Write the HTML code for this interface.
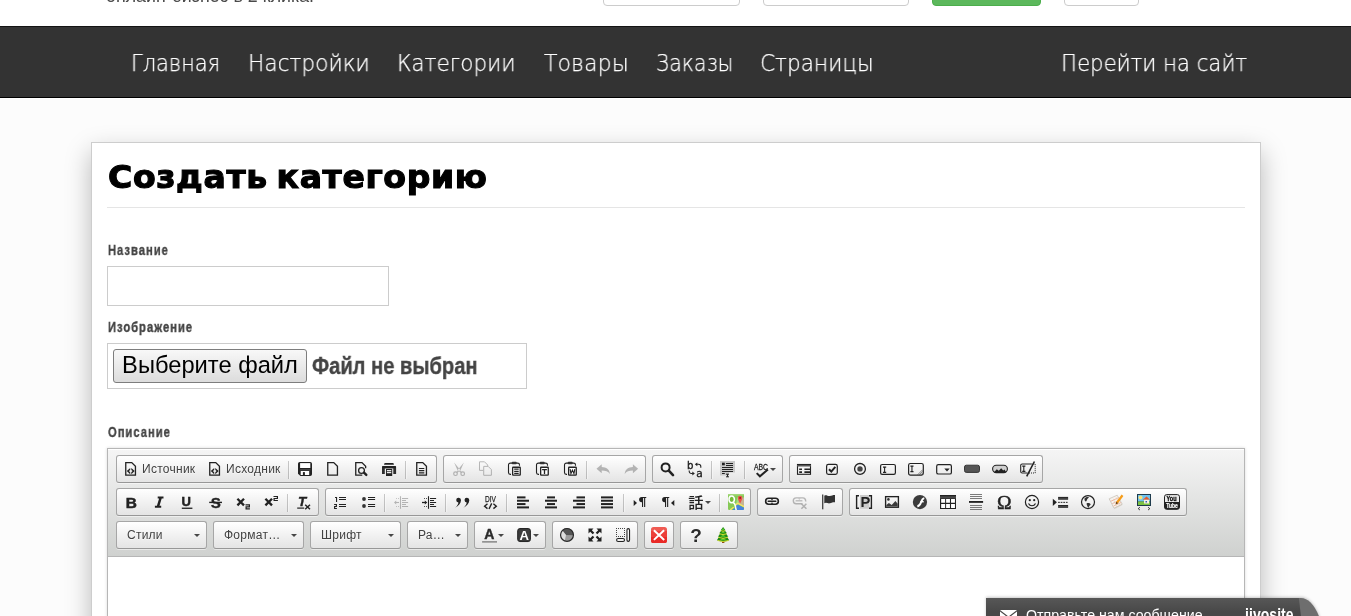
<!DOCTYPE html>
<html lang="ru">
<head>
<meta charset="utf-8">
<title>Создать категорию</title>
<style>
*{box-sizing:border-box}
html,body{margin:0;padding:0}
body{width:1351px;height:616px;overflow:hidden;background:#fcfcfc;font-family:"Liberation Sans",sans-serif;position:relative}
#nav a,h1,.lbl,#file .fb,#file .ft,.slogan,.lb,.ct,#jivo .t,#jivo .logo{will-change:transform}
/* top strip */
#top{position:absolute;left:0;top:0;width:1351px;height:26px;background:#fff;overflow:hidden}
#top .slogan{position:absolute;left:106px;top:-13.7px;font-size:17.8px;line-height:20px;color:#4a4a4a;white-space:nowrap}
#top .inp{position:absolute;top:-30px;height:36px;border:1px solid #ccc;border-radius:4px;background:#fff}
#top .btn-g{position:absolute;top:-30px;height:36px;border:1px solid #4cae4c;border-radius:4px;background:#5cb85c}
/* navbar */
#nav{position:absolute;left:0;top:26px;width:1351px;height:72px;background:#333;border-top:1px solid #141414;border-bottom:1px solid #000;box-shadow:0 1px 0 #fff}
#nav a{position:absolute;top:21px;font-family:"DejaVu Sans Light","DejaVu Sans","Liberation Sans",sans-serif;font-weight:200;font-size:23.8px;line-height:30px;color:#fff;white-space:nowrap;transform-origin:0 50%;text-decoration:none;-webkit-text-stroke:.25px #fff}
/* panel */
#panel{position:absolute;left:91px;top:142px;width:1170px;height:520px;background:#fff;border:1px solid #cdcdcd;box-shadow:0 10px 24px rgba(0,0,0,.27)}
h1{position:absolute;left:108px;top:154px;margin:0;font-family:"DejaVu Sans","Liberation Sans",sans-serif;font-weight:bold;font-size:32px;line-height:46px;letter-spacing:.62px;word-spacing:-3.2px;color:#000;white-space:nowrap;-webkit-text-stroke:1.1px #000;transform-origin:0 50%;transform:scaleX(1.033)}
#hr{position:absolute;left:107px;top:207px;width:1138px;height:1px;background:#e5e5e5}
.lbl{position:absolute;left:107.5px;font-family:"Liberation Sans",sans-serif;font-weight:bold;font-size:14px;line-height:18px;color:#444;white-space:nowrap;transform-origin:0 50%;transform:scaleX(.8);letter-spacing:1.25px;-webkit-text-stroke:.35px #444}
#name{position:absolute;left:107px;top:266px;width:282px;height:40px;border:1px solid #ccc;background:#fff}
#file{position:absolute;left:107px;top:343px;width:420px;height:46px;border:1px solid #ccc;background:#fff}
#file .fb{position:absolute;left:5px;top:5px;width:194px;height:34px;border:1px solid #7d7d7d;border-radius:3px;background:linear-gradient(#f8f8f8,#dcdcdc);font-size:23.7px;line-height:31px;color:#000;text-align:center;white-space:nowrap}
#file .ft{position:absolute;left:204px;top:6px;font-weight:bold;font-size:23.5px;line-height:32px;color:#444;white-space:nowrap;transform-origin:0 50%;transform:scaleX(.856);-webkit-text-stroke:.4px #444}
/* editor (CKEditor moono look) */
#cke,#cke *{box-sizing:content-box}
#cke{position:absolute;left:107px;top:448px;width:1136px;height:200px;border:1px solid #b6b6b6;background:#fff;box-shadow:0 0 3px rgba(0,0,0,.15);font:12px "Liberation Sans",Arial,sans-serif}
#cke .top{display:block;height:99px;padding:6px 8px 2px;border-bottom:1px solid #b6b6b6;box-shadow:0 1px 0 #fff inset;background:linear-gradient(#f5f5f5,#cfd1cf)}
.tg,.cb{float:left;margin:0 6px 5px 0;border:1px solid #a6a6a6;border-bottom-color:#979797;border-radius:3px;box-shadow:0 1px 0 rgba(255,255,255,.5),0 0 2px rgba(255,255,255,.15) inset,0 1px 0 rgba(255,255,255,.15) inset;background:linear-gradient(#fff,#e4e4e4)}
.b{float:left;height:18px;padding:4px 6px;display:inline-block}
.i{float:left;width:16px;height:16px;margin-top:1px;fill:#222;overflow:visible;will-change:transform}
.i .s{fill:none;stroke:#222}
.d .i{opacity:.3}
.lb{float:left;padding-left:3px;margin-top:1px;line-height:17px;color:#424242;text-shadow:0 1px 0 rgba(255,255,255,.5);letter-spacing:.27px;white-space:nowrap}
.ar{float:left;margin:8px 0 0 1px;width:0;height:0;border-left:3px solid transparent;border-right:3px solid transparent;border-top:3px solid #474747}
.sep{float:left;background:rgba(0,0,0,.2);margin:5px 2px 0;height:18px;width:1px;box-shadow:1px 0 1px rgba(255,255,255,.5)}
.brk{display:block;clear:left}
.ct{float:left;line-height:26px;padding-left:10px;overflow:hidden;white-space:nowrap;letter-spacing:.25px;color:#424242;text-shadow:0 1px 0 rgba(255,255,255,.5)}
.co{float:left;height:19px;margin:1px 7px;width:5px}
.ca{float:left;margin:11px 0 0;width:0;height:0;border-left:3px solid transparent;border-right:3px solid transparent;border-top:3px solid #474747}
/* jivosite label */
#jivo{position:absolute;left:986px;top:598px;width:345px;height:30px}
#jivo .bg{position:absolute;left:0;top:0;width:339.6px;height:80px;background:#6e6e6e;border-top-right-radius:25px 60px;box-shadow:0 -1px 3px rgba(0,0,0,.22)}
#jivo .fg{position:absolute;left:0;top:0;width:318px;height:30px;background:linear-gradient(#575757,#484848 14px);clip-path:polygon(0 0,312.8px 0,316.5px 30px,0 30px)}
#jivo .t{position:absolute;left:40px;top:7.3px;font-size:14.2px;line-height:20px;color:#fff;white-space:nowrap}
#jivo .logo{position:absolute;left:259px;top:2.5px;font-size:14px;line-height:20px;font-weight:bold;color:#fff;letter-spacing:.05px;transform-origin:0 0;transform:scaleY(1.35)}
#jivo svg{position:absolute;left:14px;top:12px;width:17px;height:12px}
</style>
</head>
<body>
<div id="top">
  <div class="slogan">онлайн-бизнес в 2 клика.</div>
  <div class="inp" style="left:603px;width:137px"></div>
  <div class="inp" style="left:763px;width:146px"></div>
  <div class="btn-g" style="left:932px;width:109px"></div>
  <div class="inp" style="left:1064px;width:75px"></div>
</div>
<div id="nav">
  <a style="left:131px;transform:scaleX(.88)">Главная</a>
  <a style="left:248px;transform:scaleX(.911)">Настройки</a>
  <a style="left:397px;transform:scaleX(.904)">Категории</a>
  <a style="left:543.5px;transform:scaleX(.931)">Товары</a>
  <a style="left:655.5px;transform:scaleX(.865)">Заказы</a>
  <a style="left:760px;transform:scaleX(.909)">Страницы</a>
  <a style="left:1061px;transform:scaleX(.893)">Перейти на сайт</a>
</div>
<div id="panel"></div>
<h1>Создать категорию</h1>
<div id="hr"></div>
<div class="lbl" style="top:241px">Название</div>
<div id="name"></div>
<div class="lbl" style="top:318px">Изображение</div>
<div id="file"><div class="fb">Выберите файл</div><div class="ft">Файл не выбран</div></div>
<div class="lbl" style="top:423px">Описание</div>
<div id="cke"><span class="top"><span class="tg"><a class="b" title="Источник"><svg class="i" viewBox="0 0 16 16"><path class="s" d="M2.75 1.55h6l3.7 3.7v8.9h-9.7z" stroke-width="1.3"/><path d="M7.2 7L3.8 10.1l3.4 3.1v-2l-1.3-1.1 1.3-1.2zM8.3 7l3.4 3.1-3.4 3.1v-2l1.3-1.1-1.3-1.2z"/></svg><span class="lb" style="width:53px">Источник</span></a><a class="b" title="Исходник"><svg class="i" viewBox="0 0 16 16"><path class="s" d="M2.75 1.55h6l3.7 3.7v8.9h-9.7z" stroke-width="1.3"/><path d="M7.2 7L3.8 10.1l3.4 3.1v-2l-1.3-1.1 1.3-1.2zM8.3 7l3.4 3.1-3.4 3.1v-2l1.3-1.1-1.3-1.2z"/></svg><span class="lb" style="width:54px">Исходник</span></a><span class="sep"></span><a class="b"><svg class="i" viewBox="0 0 16 16"><path d="M2.8 1h10.4A1.8 1.8 0 0 1 15 2.8v10.4a1.8 1.8 0 0 1-1.8 1.8H3.5L1 12.8V2.8A1.8 1.8 0 0 1 2.8 1z"/><rect x="3.1" y="2.1" width="10.2" height="4.9" fill="#fff"/><rect x="3.1" y="8" width="10.2" height="1.6" fill="#444"/><rect x="3.7" y="10" width="8.5" height="4" fill="#fff"/><rect x="5.9" y="11.1" width="2" height="2.9"/></svg></a><a class="b"><svg class="i" viewBox="0 0 16 16"><path class="s" d="M2.75 1.55h6l3.7 3.7v8.9h-9.7z" stroke-width="1.3"/></svg></a><a class="b"><svg class="i" viewBox="0 0 16 16"><path class="s" d="M12.65 7.2V5.25l-3.7-3.7h-6.2v12.6h6.5" stroke-width="1.3"/><circle class="s" cx="8.5" cy="9.45" r="2.9" stroke-width="1.3"/><path class="s" d="M11 11.7l2.3 2.2" stroke-width="2.4" stroke-linecap="round"/></svg></a><a class="b"><svg class="i" viewBox="0 0 16 16"><path d="M3.1 3.85v-.6A1.25 1.25 0 0 1 4.35 2h7.25a1.25 1.25 0 0 1 1.25 1.25v.6z"/><path d="M1 13V6.6a1.5 1.5 0 0 1 1.5-1.5h11.1a1.5 1.5 0 0 1 1.5 1.5V13h-2.8V7.5H3.8V13z" fill="#2e2e2e"/><rect x="1" y="5.1" width="14.1" height="2" rx="1"/><rect x="5" y="8" width="6.2" height="7"/><rect x="5.9" y="9.1" width="4.4" height="1.2" fill="#fff"/><rect x="5.9" y="11.1" width="4.4" height="1.1" fill="#fff"/></svg></a><span class="sep"></span><a class="b"><svg class="i" viewBox="0 0 16 16"><path class="s" d="M2.75 1.55h6l3.7 3.7v8.9h-9.7z" stroke-width="1.3"/><path class="s" d="M4.9 7.5h5.4M4.9 9.6h5.4M4.9 11.8h5.4" stroke-width="1.2"/></svg></a></span><span class="tg"><a class="b d"><svg class="i" viewBox="0 0 16 16"><path d="M4.1 1.6l6.2 7.4-2.1 1.8zM13.9 1.6L7.7 9l2.1 1.8z"/><circle class="s" cx="5.5" cy="12.7" r="1.8" stroke-width="1.2"/><circle class="s" cx="12.7" cy="12.7" r="1.8" stroke-width="1.2"/><path class="s" d="M8.4 10.2l-1.8 1.3M9.7 10.2l1.8 1.3" stroke-width="1.3"/></svg></a><a class="b d"><svg class="i" viewBox="0 0 16 16"><path class="s" d="M5.2 9.4H1.5V.8h5l3.2 3.2v1" stroke-width="1"/><path class="s" d="M5.7 5.4h4.5l3.2 3.2v5.7H5.7z" stroke-width="1"/></svg></a><a class="b"><svg class="i" viewBox="0 0 16 16"><path class="s" d="M5 13.4H4.3a1.8 1.8 0 0 1-1.8-1.8V3.9a1.8 1.8 0 0 1 1.8-1.8h7.4a1.8 1.8 0 0 1 1.8 1.8v.9" stroke-width="1.1"/><rect x="5.7" y=".7" width="5" height="2.5" rx=".9" fill="#333"/><rect x="6.6" y="6.2" width="7.7" height="8" fill="#fff"/><rect class="s" x="6.65" y="6.25" width="7.6" height="7.9" rx=".5" stroke-width="1.3"/><path class="s" d="M8.2 8.2h4.5M8.2 10.3h4.5M8.2 12.4h4.5" stroke-width="1.2"/></svg></a><a class="b"><svg class="i" viewBox="0 0 16 16"><path class="s" d="M5 13.4H4.3a1.8 1.8 0 0 1-1.8-1.8V3.9a1.8 1.8 0 0 1 1.8-1.8h7.4a1.8 1.8 0 0 1 1.8 1.8v.9" stroke-width="1.1"/><rect x="5.7" y=".7" width="5" height="2.5" rx=".9" fill="#333"/><rect x="6.6" y="6.2" width="7.7" height="8" fill="#fff"/><rect class="s" x="6.65" y="6.25" width="7.6" height="7.9" rx=".5" stroke-width="1.3"/><path d="M8.1 8h4.8v1.3h-1.75v3.6H9.85V9.3H8.1z"/></svg></a><a class="b"><svg class="i" viewBox="0 0 16 16"><path class="s" d="M5 13.4H4.3a1.8 1.8 0 0 1-1.8-1.8V3.9a1.8 1.8 0 0 1 1.8-1.8h7.4a1.8 1.8 0 0 1 1.8 1.8v.9" stroke-width="1.1"/><rect x="5.7" y=".7" width="5" height="2.5" rx=".9" fill="#333"/><rect x="6.6" y="6.2" width="7.7" height="8" fill="#fff"/><rect class="s" x="6.65" y="6.25" width="7.6" height="7.9" rx=".5" stroke-width="1.3"/><path class="s" d="M8.1 8.2l.85 4.4 1.5-3.5 1.5 3.5.85-4.4" stroke-width="1.1"/></svg></a><span class="sep"></span><a class="b d"><svg class="i" viewBox="0 0 16 16"><path d="M1.5 7.7l5.2-4.5v2.9c4.6.1 7.7 2.2 8.2 6.8-1.7-2.6-4.3-3.5-8.2-3.5v2.8z"/></svg></a><a class="b d"><svg class="i" viewBox="0 0 16 16"><g transform="translate(16.6 0) scale(-1 1)"><path d="M1.5 7.7l5.2-4.5v2.9c4.6.1 7.7 2.2 8.2 6.8-1.7-2.6-4.3-3.5-8.2-3.5v2.8z"/></g></svg></a></span><span class="tg"><a class="b"><svg class="i" viewBox="0 0 16 16"><circle class="s" cx="6.6" cy="6.4" r="4" stroke-width="2"/><path class="s" d="M9.8 9.7l4.2 4.4" stroke-width="2.6" stroke-linecap="round"/></svg></a><a class="b"><svg class="i" viewBox="0 0 16 16"><text x="0" y="7.8" font-size="10.2" style="stroke:#222" stroke-width=".35" font-family="DejaVu Sans,Liberation Sans,sans-serif">b</text><text x="9.3" y="15.6" font-size="10.6" style="stroke:#222" stroke-width=".35" font-family="DejaVu Sans,Liberation Sans,sans-serif">a</text><path class="s" d="M9.5 3.3h2a2.3 2.3 0 0 1 2.3 2.3v1.2" stroke-width="1.1"/><path d="M10.3 1.4v3.8L7.8 3.3z"/><path class="s" d="M2.2 9.5v.7a2.3 2.3 0 0 0 2.3 2.3h1.3" stroke-width="1.1"/><path d="M5.3 10.6v3.8l2.5-1.9z"/></svg></a><span class="sep"></span><a class="b"><svg class="i" viewBox="0 0 16 16"><path d="M0 0h15v11.5H9v3H0z" fill="#c9c9c9"/><rect x="2" y="1.7" width="2.8" height="2.6"/><path class="s" d="M6 2.5h7M6 4.5h7M2 6.5h11M2 8.5h11M2 10.5h11M2 12.5h2.8" stroke-width="1"/><path class="s" d="M6 13.2h3M6 15.8h3M7.5 13.2v2.6" stroke-width="1"/></svg></a><span class="sep"></span><a class="b"><svg class="i" viewBox="0 0 16 16"><text x="0.9" y="8.7" font-size="9.3" textLength="14" lengthAdjust="spacingAndGlyphs" style="stroke:#222" stroke-width=".3" font-family="Liberation Sans,sans-serif">ABC</text><path class="s" d="M3.7 12.1l3.2 3.2 8-6.8" stroke-width="2"/></svg><span class="ar"></span></a></span><span class="tg"><a class="b"><svg class="i" viewBox="0 0 16 16"><rect class="s" x="1.5" y="3.5" width="13" height="9.8" stroke-width="1.1"/><rect x="1" y="3" width="14" height="2.5" fill="#555"/><rect x="1" y="3" width="14" height="1"/><path class="s" d="M3.2 8.2h2.8M8.4 8.2h5.6M3.2 11.1h2.8M8.4 11.1h5.6" stroke-width="1.6"/></svg></a><a class="b"><svg class="i" viewBox="0 0 16 16"><rect class="s" x="2.6" y="3.4" width="10.7" height="9.9" rx="1.8" stroke-width="1.2"/><path class="s" d="M5 8.2l2.3 2.4 4-4.8" stroke-width="2"/></svg></a><a class="b"><svg class="i" viewBox="0 0 16 16"><circle class="s" cx="8" cy="7.9" r="5.4" stroke-width="1.3"/><circle cx="8" cy="7.9" r="2.7" fill="#444"/></svg></a><a class="b"><svg class="i" viewBox="0 0 16 16"><rect class="s" x=".6" y="3.5" width="14.8" height="9.8" rx="1.6" stroke-width="1.2"/><path class="s" d="M3 6.1h3.2M3 11.4h3.2M4.6 6.1v5.3" stroke-width="1.1"/></svg></a><a class="b"><svg class="i" viewBox="0 0 16 16"><rect class="s" x=".6" y="2.5" width="14.7" height="11.6" rx="1.8" stroke-width="1.2"/><path class="s" d="M2.4 5.1h3.1M2.4 10.6h3.1M3.95 5.1v5.5" stroke-width="1.1"/><path class="s" d="M14.8 10.3l-4 4M14.8 12l-2.3 2.3M14.8 8.6l-5.7 5.7" stroke-width=".7" style="stroke:#555"/></svg></a><a class="b"><svg class="i" viewBox="0 0 16 16"><rect class="s" x=".7" y="3.6" width="14.7" height="9.4" rx="1.6" stroke-width="1.2"/><path d="M8.3 7.4h5.4l-2.7 3z"/></svg></a><a class="b"><svg class="i" viewBox="0 0 16 16"><rect x=".5" y="4.2" width="15" height="7.2" rx="1.8" fill="#555" style="stroke:#2a2a2a" stroke-width=".9"/></svg></a><a class="b"><svg class="i" viewBox="0 0 16 16"><rect x=".6" y="4.3" width="14.8" height="7.3" rx="3.6" fill="#d0d0d0"/><path d="M2 11.2l2.8-3 2 1.6 2.4-2.6 2 2.2 1.3-1 1.7 2.8z"/><rect class="s" x=".6" y="4.3" width="14.8" height="7.3" rx="3.6" stroke-width="1.1"/></svg></a><a class="b"><svg class="i" viewBox="0 0 16 16"><path class="s" d="M11.4 3H2.2a1.5 1.5 0 0 0-1.5 1.5v6A1.5 1.5 0 0 0 2.2 12h5.3" stroke-width="1.1"/><path class="s" d="M11.4 3h3.8v9H8.5" stroke-width="1" stroke-dasharray="1 1"/><path class="s" d="M2.2 5.1h3.2M2.2 10.4h3.2M3.8 5.1v5.3" stroke-width="1.1"/><path class="s" d="M14.4 .5L6.7 15.3" stroke-width="1.6"/></svg></a></span><span class="brk"></span><span class="tg"><a class="b"><svg class="i" viewBox="0 0 16 16"><text x="2.7" y="13.7" font-size="15.4" font-weight="bold" style="stroke:#222" stroke-width=".55" font-family="Liberation Sans,sans-serif">B</text></svg></a><a class="b"><svg class="i" viewBox="0 0 16 16"><path d="M6.7 2.5H12.5V4.4H10.7L8.5 11.8H10.2V13.7H3.9V11.8H5.9L8.1 4.4H6.7z"/></svg></a><a class="b"><svg class="i" viewBox="0 0 16 16"><text x="2.5" y="11.8" font-size="13" font-weight="bold" style="stroke:#222" stroke-width=".5" font-family="Liberation Sans,sans-serif">U</text><rect x="2.8" y="13.6" width="10.6" height="1.3"/></svg></a><a class="b"><svg class="i" viewBox="0 0 16 16"><text x="3.7" y="13.5" font-size="15.2" font-weight="bold" style="stroke:#222" stroke-width=".3" font-family="Liberation Sans,sans-serif">S</text><rect x="2.2" y="7.7" width="12.8" height="1.4"/></svg></a><a class="b"><svg class="i" viewBox="0 0 16 16"><path class="s" d="M2.4 4.8l6.6 6.6M9 4.8l-6.6 6.6" stroke-width="2.3"/><g transform="translate(10.5 10.3)"><path class="s" d="M0 .6h3.9v2H.6v2h3.8" stroke-width="1.2"/></g></svg></a><a class="b"><svg class="i" viewBox="0 0 16 16"><path class="s" d="M2.4 4.8l6.6 6.6M9 4.8l-6.6 6.6" stroke-width="2.3"/><g transform="translate(10.5 1.9)"><path class="s" d="M0 .6h3.9v2H.6v2h3.8" stroke-width="1.2"/></g></svg></a><span class="sep"></span><a class="b"><svg class="i" viewBox="0 0 16 16"><text x="2" y="11.9" font-size="13.5" font-weight="bold" font-style="italic" style="stroke:#222" stroke-width=".4" font-family="Liberation Sans,sans-serif">T</text><rect x="1.2" y="13.5" width="7" height="1.2"/><path class="s" d="M9.2 10.8l4.8 4.4M14 10.8l-4.8 4.4" stroke-width="1.5"/></svg></a></span><span class="tg"><a class="b"><svg class="i" viewBox="0 0 16 16"><path class="s" d="M7 3.5h7M7 5.5h7M7 10.5h7M7 12.5h7" stroke-width="1.1"/><path class="s" d="M3 3.55h1.55V8" stroke-width="1.1"/><path class="s" d="M2.1 10.55h2.3v1.95H2.6v1.95h2.3" stroke-width="1.1"/></svg></a><a class="b"><svg class="i" viewBox="0 0 16 16"><path class="s" d="M8 3.5h7.1M8 5.5h7.1M8 10.5h7.1M8 12.5h7.1" stroke-width="1.1"/><circle cx="4" cy="5" r="1.9" fill="#333"/><circle cx="4" cy="12" r="1.9" fill="#333"/></svg></a><span class="sep"></span><a class="b d"><svg class="i" viewBox="0 0 16 16"><path class="s" d="M7.5 2.2v12.6" stroke-width="1.1"/><path class="s" d="M9 4.5h6.1M9 6.5h4M9 8.5h6.1M9 10.5h4M9 12.5h6.1" stroke-width="1.1"/><path d="M3 4h1v1H3zM5 4h1v1H5zM3 12h1v1H3zM5 12h1v1H5z" fill="#555"/><path class="s" d="M2.5 8.5H6" stroke-width="1.1"/><path d="M1 8.5l2.2-1.9v3.8z"/></svg></a><a class="b"><svg class="i" viewBox="0 0 16 16"><path class="s" d="M7.5 2.2v12.6" stroke-width="1.1"/><path class="s" d="M9 4.5h6.1M9 6.5h4M9 8.5h6.1M9 10.5h4M9 12.5h6.1" stroke-width="1.1"/><path d="M3 4h1v1H3zM5 4h1v1H5zM3 12h1v1H3zM5 12h1v1H5z" fill="#555"/><path class="s" d="M1 8.5h3.5" stroke-width="1.3"/><path d="M6.3 8.5L3.8 6.4v4.2z"/></svg></a><span class="sep"></span><a class="b"><svg class="i" viewBox="0 0 16 16"><path transform="translate(0 0)" d="M2.2 6A2.4 2.4 0 1 1 7 6.2C6.9 9.5 4.5 12 1.1 13.8 3.3 11.8 4.3 10 4.4 8.4A2.4 2.4 0 0 1 2.2 6z"/><path transform="translate(8.3 0)" d="M2.2 6A2.4 2.4 0 1 1 7 6.2C6.9 9.5 4.5 12 1.1 13.8 3.3 11.8 4.3 10 4.4 8.4A2.4 2.4 0 0 1 2.2 6z"/></svg></a><a class="b"><svg class="i" viewBox="0 0 16 16"><text x="3" y="7.8" font-size="9.3" textLength="11" lengthAdjust="spacingAndGlyphs" style="stroke:#222" stroke-width=".25" font-family="Liberation Sans,sans-serif">DIV</text><path class="s" d="M5.5 9.8L2.6 12.2l2.9 2.4M11.4 9.8l2.9 2.4-2.9 2.4M9.7 9.4L7 15" stroke-width="1.4"/></svg></a><span class="sep"></span><a class="b"><svg class="i" viewBox="0 0 16 16"><rect x="2" y="2.40" width="8.5" height="2"/><rect x="2" y="5.73" width="12" height="2"/><rect x="2" y="9.07" width="8.5" height="2"/><rect x="2" y="12.40" width="12" height="2"/></svg></a><a class="b"><svg class="i" viewBox="0 0 16 16"><rect x="4" y="2.40" width="8" height="2"/><rect x="2" y="5.73" width="12" height="2"/><rect x="4" y="9.07" width="8" height="2"/><rect x="2" y="12.40" width="12" height="2"/></svg></a><a class="b"><svg class="i" viewBox="0 0 16 16"><rect x="5.5" y="2.40" width="8.5" height="2"/><rect x="2" y="5.73" width="12" height="2"/><rect x="5.5" y="9.07" width="8.5" height="2"/><rect x="2" y="12.40" width="12" height="2"/></svg></a><a class="b"><svg class="i" viewBox="0 0 16 16"><rect x="2" y="2.40" width="12" height="2"/><rect x="2" y="5.73" width="12" height="2"/><rect x="2" y="9.07" width="12" height="2"/><rect x="2" y="12.40" width="12" height="2"/></svg></a><span class="sep"></span><a class="b"><svg class="i" viewBox="0 0 16 16"><path d="M1.7 5.9l3.3 3-3.3 3z"/><path d="M9.70 3H14.25V3.9H13.20V13H12.10V3.9H11.10V13H10.00V8.2H9.70A2.6 2.6 0 0 1 9.70 3z"/></svg></a><a class="b"><svg class="i" viewBox="0 0 16 16"><path d="M14.3 5.9l-3.3 3 3.3 3z"/><path d="M4.70 3H9.25V3.9H8.20V13H7.10V3.9H6.10V13H5.00V8.2H4.70A2.6 2.6 0 0 1 4.70 3z"/></svg></a><a class="b"><svg class="i" viewBox="0 0 16 16"><text x=".2" y="13.8" font-size="15.2" font-weight="500" font-family="Noto Sans CJK JP,Noto Sans CJK SC,WenQuanYi Zen Hei,sans-serif">話</text></svg><span class="ar"></span></a><span class="sep"></span><a class="b"><svg class="i" viewBox="0 0 16 16"><rect width="16" height="16" rx="1.2" fill="#86c956"/><rect width="16" height="1.6" rx=".8" fill="#a3d87a"/><path d="M10.3 3.5H16v9l-5.7-2.7z" fill="#c7b494"/><path d="M9.3 3.5l1.2-.5v7l-2.8 2.2z" fill="#a8dc84"/><path d="M6.6 10.7L9.7 8.4l6.3 3.4v1.6L9.8 10.2l-2.3 1.8z" fill="#f3e463"/><path d="M7.6 12.3l2.2-1.7L16 13.8v1a1.2 1.2 0 0 1-1.2 1.2H8.7z" fill="#4583dc"/><path d="M1.8 15.2l3.4-2.5.9.9L3.4 16H2.2z" fill="#f3e463"/><path d="M4.2 16l2.3-1.9L7.8 16z" fill="#4583dc"/><ellipse cx="3.7" cy="5.3" rx="2.7" ry="3.4" fill="#74bb38" style="stroke:#fff" stroke-width="1.5"/><path class="s" d="M5.3 8.5C8.2 10.3 6.8 13 8.3 16" style="stroke:#fff" stroke-width="1.5"/><path d="M12.1 1.7a2.2 2.2 0 0 1 2.2 2.2c0 1.7-2.2 5.4-2.2 5.4S9.9 5.6 9.9 3.9a2.2 2.2 0 0 1 2.2-2.2z" fill="#ec5248"/><circle cx="12.1" cy="3.9" r=".85" fill="#7d1c15"/></svg></a></span><span class="tg"><a class="b"><svg class="i" viewBox="0 0 16 16"><rect class="s" x="1.65" y="4.3" width="12.7" height="5.9" rx="2.95" stroke-width="1.6"/><rect x="3.5" y="6.6" width="9" height="1.3" rx=".6"/><path d="M6.7 4.8h2.6L8 6.2zM6.7 9.7h2.6L8 8.3z"/></svg></a><a class="b d"><svg class="i" viewBox="0 0 16 16"><path class="s" d="M10.5 9.7H4.2a2.9 2.9 0 0 1 0-5.8h6.6a2.9 2.9 0 0 1 2.8 3.6" stroke-width="1.4"/><path class="s" d="M3.6 6.8h6.8" stroke-width="1.2"/><path d="M6.1 4.5h2.4L7.3 5.7z"/><path class="s" d="M9.4 9.7l5 5M14.4 9.7l-5 5" stroke-width="1.5"/></svg></a><a class="b"><svg class="i" viewBox="0 0 16 16"><rect x="2.2" y=".5" width="1.1" height="14.8"/><path d="M4.3 1.8c1.8-1.4 3.5.6 5.5.2s3.7-1.3 5.2-1v7.3c-1.5-.3-3.2.5-5.2 1s-3.7-1.5-5.5 0z" fill="#333"/></svg></a></span><span class="tg"><a class="b"><svg class="i" viewBox="0 0 16 16"><rect x="3.95" y="1" width="9.35" height="13.7" fill="#cbcbcb"/><text x="4.5" y="12.85" font-size="14.7" font-weight="bold" font-family="Liberation Sans,sans-serif">P</text><path class="s" d="M3 1.7H.6v12.6H3M13 1.7h2.4v12.6H13" stroke-width="1.4"/></svg></a><a class="b"><svg class="i" viewBox="0 0 16 16"><rect class="s" x="1.6" y="2.65" width="12.8" height="10.6" stroke-width="1.35"/><path d="M2.3 12.6V11l2.6-2 2.8 2L11.4 7l2.3 2.7v2.9z" fill="#3a3a3a"/><circle cx="4.4" cy="5.4" r="1.3" fill="#333"/></svg></a><a class="b"><svg class="i" viewBox="0 0 16 16"><circle cx="7.95" cy="8.03" r="7.15" fill="#3c3c3c"/><path class="s" d="M5.3 12.3c2.2-.2 3-2.1 3.7-4s1.4-3.9 3.3-4.2" style="stroke:#fff" stroke-width="1.9"/><path class="s" d="M8.4 7.7h3.3" style="stroke:#fff" stroke-width="1.5"/></svg></a><a class="b"><svg class="i" viewBox="0 0 16 16"><rect x="0" y="1" width="16" height="14"/><rect x="0" y="2.3" width="16" height="2.2" fill="#4a4a4a"/><path d="M1.15 5.1h4v3.7h-4zM6.1 5.1h3.85v3.7H6.1zM11.05 5.1h3.9v3.7h-3.9zM1.15 10.1h4v3.9h-4zM6.1 10.1h3.85v3.9H6.1zM11.05 10.1h3.9v3.9h-3.9z" fill="#fff"/></svg></a><a class="b"><svg class="i" viewBox="0 0 16 16"><path class="s" d="M2 .5h12M2 2.5h12M2 4.5h12M2 11.5h12M2 13.5h12M2 15.5h12" stroke-width=".8" style="stroke:#5a5a5a"/><rect x="1" y="7" width="14.1" height="1.85"/></svg></a><a class="b"><svg class="i" viewBox="0 0 16 16"><text x="1" y="14.7" font-size="19.6" style="stroke:#222" stroke-width=".5" font-family="Liberation Serif,serif">Ω</text></svg></a><a class="b"><svg class="i" viewBox="0 0 16 16"><circle class="s" cx="8" cy="8" r="6.6" stroke-width="1.2"/><circle cx="5.8" cy="6.2" r="1.1"/><circle cx="10.2" cy="6.2" r="1.1"/><path class="s" d="M4.5 9.5c1.5 3 5.5 3 7 0" stroke-width="1.2"/></svg></a><a class="b"><svg class="i" viewBox="0 0 16 16"><path d="M.8 4.8l4.1 3.55L.8 11.9z"/><rect x="6.1" y="2.9" width="10" height="2.8"/><rect x="6.1" y="11" width="10" height="2.8"/><path class="s" d="M6.1 4.3h10M6.1 12.4h10" stroke-width=".4" style="stroke:#888"/><path class="s" d="M6.1 8.35h10" stroke-width="1" stroke-dasharray="1.7 .9"/></svg></a><a class="b"><svg class="i" viewBox="0 0 16 16"><circle class="s" cx="8" cy="8.05" r="6.5" stroke-width="1.2"/><path d="M4.6 4.3c1.3-1.4 3-1.6 4.3-1.2-.2 1.2-1.3 1.5-1.8 2.5s-.4 2-1.4 1.9-1.5-1.8-1.1-3.2zM6.8 9.2c1.3-.6 3.2-.2 3.9 1.1-.5 1-1.4 1.3-1.7 2.4s-.7 1.4-1.2.4-.5-1.3-.9-2.2-.4-1.4-.1-1.7z" fill="#333"/></svg></a><a class="b"><svg class="i" viewBox="0 0 16 16"><path d="M1.5 5.5l7.8-3.7 5.2 9.2-8 4.2z" fill="#dcd8d2"/><path d="M1.2 4.8l8-3.6 5 9-8.2 4z" fill="#f6f3ee" style="stroke:#bdb4a8" stroke-width=".6"/><path d="M3 7.2l7.5-3.5M4.3 9.6l7.5-3.5M5.6 12l7.5-3.5" style="stroke:#eda88f" stroke-width=".8" fill="none"/><path d="M5.3 4.8l3.3 8M8.3 3.4l3.3 8" style="stroke:#d9cfc3" stroke-width=".6" fill="none"/><path d="M13.6 .6l1.8 1.3-5.3 7.3-2.4 1 .6-2.4z" fill="#f59c1a"/><path d="M7.7 10.2l.6-2.4 1.8 1.4z" fill="#5a3d1c"/></svg></a><a class="b"><svg class="i" viewBox="0 0 16 16"><rect x="1" y="0" width="14" height="12" fill="#1f3b4d"/><rect x="2" y="1" width="12" height="6.5" fill="#6fc3f0"/><circle cx="4.5" cy="3.5" r="2" fill="#f7e27a"/><rect x="2" y="7.5" width="12" height="3.5" fill="#7cc242"/><path d="M6.8 5.8L10.5 2.5l3.5 3.3z" fill="#e8582a"/><rect x="8" y="5.8" width="5" height="3.7" fill="#f6f0e2"/><rect x="9.5" y="7" width="1.5" height="1.5" fill="#2f5fb8"/><path class="s" d="M3.9 13.3L2.2 14.65l1.7 1.35M12.1 13.3l1.7 1.35-1.7 1.35" stroke-width="1" style="stroke:#333"/></svg></a><a class="b"><svg class="i" viewBox="0 0 16 16"><rect x=".5" y=".6" width="15" height="14.7" rx="2.2" fill="#ececec" style="stroke:#222" stroke-width="1"/><path d="M.5 7.9h15v5.2a2.2 2.2 0 0 1-2.2 2.2H2.7a2.2 2.2 0 0 1-2.2-2.2z"/><text x="2.6" y="6.7" font-size="6.6" font-weight="bold" style="stroke:#111" stroke-width=".3" fill="#111" textLength="10" lengthAdjust="spacingAndGlyphs" font-family="Liberation Sans,sans-serif">You</text><text x="2.3" y="14.1" font-size="6.6" font-weight="bold" fill="#fff" style="stroke:#fff" stroke-width=".2" textLength="11.4" lengthAdjust="spacingAndGlyphs" font-family="Liberation Sans,sans-serif">Tube</text></svg></a></span><span class="brk"></span><a class="cb"><span class="ct" style="width:60px">Стили</span><span class="co"><span class="ca"></span></span></a><a class="cb"><span class="ct" style="width:60px">Формат…</span><span class="co"><span class="ca"></span></span></a><a class="cb"><span class="ct" style="width:60px">Шрифт</span><span class="co"><span class="ca"></span></span></a><a class="cb"><span class="ct" style="width:30px">Ра…</span><span class="co"><span class="ca"></span></span></a><span class="tg"><a class="b"><svg class="i" viewBox="0 0 16 16"><text x="3.3" y="11.9" font-size="14" font-weight="bold" style="stroke:#2a2a2a" stroke-width=".4" fill="#2a2a2a" font-family="Liberation Sans,sans-serif">A</text><rect x="1.1" y="14.1" width="14.9" height="1.55" fill="#8a8a8a"/></svg><span class="ar"></span></a><a class="b"><svg class="i" viewBox="0 0 16 16"><rect x="1.7" y="1.55" width="12.7" height="13" rx="2.2" fill="#3c3c3c" style="stroke:#222" stroke-width="1"/><text x="3.55" y="12.55" font-size="13.1" font-weight="bold" fill="#fff" font-family="Liberation Sans,sans-serif">A</text></svg><span class="ar"></span></a></span><span class="tg"><a class="b"><svg class="i" viewBox="0 0 16 16"><circle cx="8" cy="7.95" r="6.5" fill="#9c9c9c"/><path d="M7 8L3.2 3.3A6.5 6.5 0 0 1 14.5 8.3z" fill="#555"/><path d="M7 8L3.2 3.3A6.5 6.5 0 0 0 5.7 14.1z" fill="#dedede"/><circle class="s" cx="8" cy="7.95" r="6.45" stroke-width="1.2" style="stroke:#2a2a2a"/></svg></a><a class="b"><svg class="i" viewBox="0 0 16 16"><path d="M1.5 1.5h5l-1.7 1.7 2.5 2.5-1.6 1.6-2.5-2.5L1.5 6.5z"/><g transform="translate(16 0) scale(-1 1)"><path d="M1.5 1.5h5l-1.7 1.7 2.5 2.5-1.6 1.6-2.5-2.5L1.5 6.5z"/></g><g transform="translate(0 16) scale(1 -1)"><path d="M1.5 1.5h5l-1.7 1.7 2.5 2.5-1.6 1.6-2.5-2.5L1.5 6.5z"/></g><g transform="translate(16 16) scale(-1 -1)"><path d="M1.5 1.5h5l-1.7 1.7 2.5 2.5-1.6 1.6-2.5-2.5L1.5 6.5z"/></g></svg></a><a class="b"><svg class="i" viewBox="0 0 16 16"><path d="M1 1h1v1h-1zM1 9h1v1h-1zM3 1h1v1h-1zM3 9h1v1h-1zM5 1h1v1h-1zM5 9h1v1h-1zM7 1h1v1h-1zM7 9h1v1h-1zM9 1h1v1h-1zM9 9h1v1h-1zM1 3h1v1H1zM9 3h1v1H9zM1 5h1v1H1zM9 5h1v1H9zM1 7h1v1H1zM9 7h1v1H9z" fill="#444"/><rect class="s" x="11.95" y="1.6" width="2.6" height="12.8" rx="1.3" stroke-width="1.1"/><rect class="s" x="1.6" y="11.55" width="7.9" height="2.9" rx="1.45" stroke-width="1.1"/></svg></a></span><span class="tg"><a class="b"><svg class="i" viewBox="0 0 16 16"><rect x="0" y="0" width="16" height="16" rx="2.6" fill="#ef5a52"/><rect x="0" y="5" width="16" height="11" rx="2.6" fill="#e92a27"/><rect x="0" y="4" width="16" height="6" fill="#ec3f39"/><path class="s" d="M2.9 3.2l10.3 9.7M13.1 3.2L2.9 12.9" style="stroke:#fff" stroke-width="2"/></svg></a></span><span class="tg"><a class="b"><svg class="i" viewBox="0 0 16 16"><text x="3.2" y="14.6" font-size="19" font-weight="bold" fill="#2a2a2a" font-family="Liberation Sans,sans-serif">?</text></svg></a><a class="b"><svg class="i" viewBox="0 0 16 16"><rect x="7" y="14.3" width="2.4" height="1.7" fill="#8a4b1c"/><path d="M8.1 0l2.4 3.2h-.9L12 6.3h-1.2l2.5 3.5H12l2.2 3.5Q8.1 16 1.9 13.3l2.2-3.5H2.9l2.5-3.5H4.2l2.4-3.1h-.9z" fill="#1f8a14"/><path d="M8.1 .8l1.3 2.2H6.8zM8.1 4l2 2.2h-4zM8.1 7.2l2.6 2.5H5.5zM8.1 10.6l3.3 2.6H4.8z" fill="#57c62c"/><path class="s" d="M5.8 3.6q2.3 1.3 4.6 0M4.5 6.8q3.6 1.7 7.2 0M3.3 10.3q4.8 2.1 9.6 0M2.6 13.5q5.5 2 11 0" style="stroke:#e4e02e" stroke-width=".9"/></svg></a></span></span></div>
<div id="jivo"><div class="bg"></div><div class="fg"></div>
<svg viewBox="0 0 17 12"><path d="M0 0h17L8.5 6.500zM0 1.500v10.500h17V1.500L8.5 8z" fill="#fff"/></svg>
<div class="t">Отправьте нам сообщение</div><div class="logo">jivosite</div></div>
</body>
</html>
